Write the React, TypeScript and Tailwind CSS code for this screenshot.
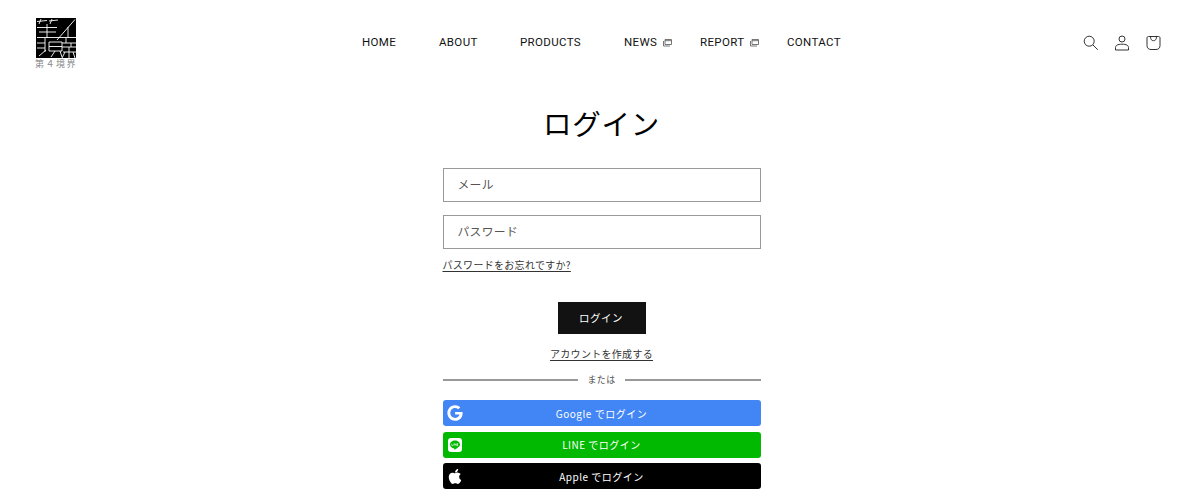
const jp = { fontFamily: '"Noto Sans CJK JP", "Noto Sans", sans-serif' };

function Logo() {
  return (
    <div className="flex w-10 flex-col items-center">
      <svg width="40" height="40" viewBox="0 0 40 40">
        <rect width="40" height="40" fill="#000" />
        <g stroke="#fff" strokeWidth="0.9" fill="none">
          <path d="M1 3.500l10-1M13 3l9-1M5 1l-2 5M16 1l-2 5" />
          <path d="M1 9.500h20M3 14h17M1 19.500h39M11 6v14" />
          <path d="M21 22L39 1.500M32 9v11" />
          <path d="M9 20v14M1 25h8M1 30h8M3 38l7-6" />
          <path d="M13 24h13v9H13zM13 28.500h13M19 33l-4 6M24 33l2 6" />
          <path d="M26 25h14M30 20v5M26 29h14M35 25v4M27 34h13M29 34l-3 6M33 29v11M37 34l2 6" />
        </g>
      </svg>
      <span className="mt-px text-[9px] leading-[10px] tracking-[1.500px] whitespace-nowrap text-[#888]" style={jp}>第４境界</span>
    </div>
  );
}

function WindowIcon() {
  return (
    <svg width="9" height="8" viewBox="0 0 9 8" fill="none" stroke="#666" strokeWidth="0.9" className="ml-[6px]">
      <path d="M2 .5h6.500v5H2zM2 1.700h6.500" />
      <path d="M.5 2v5h6.500" />
    </svg>
  );
}

function NavItem({ label, external, className }: { label: string; external?: boolean; className: string }) {
  return (
    <a href="#" className={`flex items-center text-[11.500px] tracking-[0.35px] text-[#121212] ${className}`}>
      {label}
      {external && <WindowIcon />}
    </a>
  );
}

function SocialButton({ color, label, icon }: { color: string; label: string; icon: React.ReactNode }) {
  return (
    <button className={`relative flex h-[26px] w-full items-center justify-center rounded-[3px] text-[10px] tracking-[0.5px] text-white ${color}`}>
      <span className="absolute top-1/2 left-[4px] flex h-4 w-4 -translate-y-1/2 items-center justify-center">{icon}</span>
      {label}
    </button>
  );
}

function GoogleIcon() {
  return (
    <svg width="16" height="16" viewBox="0 0 488 512" fill="#fff">
      <path d="M488 261.800C488 403.300 391.100 504 248 504 110.800 504 0 393.200 0 256S110.800 8 248 8c66.800 0 123 24.500 166.300 64.900l-67.500 64.900C258.500 52.600 94.300 116.600 94.300 256c0 86.500 69.100 156.600 153.700 156.600 98.200 0 135-70.400 140.800-106.900H248v-85.300h236.100c2.300 12.700 3.900 24.900 3.900 41.400z" />
    </svg>
  );
}

function LineIcon() {
  return (
    <svg width="14" height="14" viewBox="0 0 14 14">
      <rect width="14" height="14" rx="3" fill="#fff" />
      <path d="M7 2.600c-2.800 0-5 1.800-5 4 0 2 1.700 3.600 4.100 3.900.4.100.3.600.2 1 0 .3.300.3.600.1 1.700-1 4-2.600 4.700-3.500.3-.5.4-1 .4-1.500 0-2.200-2.200-4-5-4z" fill="#00b900" />
      <path d="M3.800 5.600v2h1.200M5.800 5.600v2M6.800 7.600v-2l1.400 2v-2M10.200 5.600H9.100v2h1.100M9.100 6.600h1" stroke="#fff" strokeWidth="0.6" fill="none" />
    </svg>
  );
}

function AppleIcon() {
  return (
    <svg width="14" height="17" viewBox="0 0 384 512" fill="#fff">
      <path d="M318.700 268.700c-.2-36.700 16.400-64.400 50-84.800-18.800-26.900-47.200-41.700-84.700-44.600-35.500-2.800-74.300 20.700-88.500 20.700-15 0-49.400-19.700-76.400-19.700C63.300 141.200 4 184.800 4 273.500q0 39.300 14.400 81.200c12.800 36.700 59 126.700 107.200 125.200 25.200-.6 43-17.900 75.800-17.900 31.800 0 48.300 17.900 76.400 17.900 48.600-.7 90.400-82.500 102.600-119.300-65.200-30.700-61.700-90-61.700-91.900zm-56.600-164.200c27.300-32.400 24.800-61.900 24-72.500-24.100 1.400-52 16.400-67.900 34.900-17.500 19.800-27.800 44.300-25.600 71.900 26.100 2 49.900-11.400 69.500-34.300z" />
    </svg>
  );
}

export default function App() {
  return (
    <div className="h-[497px] overflow-hidden bg-white text-[#121212]" style={jp}>
      <header className="flex h-[85px] items-start pr-[38px] pl-[36px]">
        <div className="pt-[18px]">
          <Logo />
        </div>
        <nav className="ml-[286px] flex h-[85px] items-center" style={{ fontFamily: 'Roboto, "Noto Sans", sans-serif' }}>
          <NavItem label="HOME" className="w-[77px]" />
          <NavItem label="ABOUT" className="w-[81px]" />
          <NavItem label="PRODUCTS" className="w-[104px]" />
          <NavItem label="NEWS" external className="w-[76px]" />
          <NavItem label="REPORT" external className="w-[87px]" />
          <NavItem label="CONTACT" className="w-[60px]" />
        </nav>
        <div className="ml-auto flex h-[85px] items-center gap-[15.500px] text-[#333]">
          <svg width="16" height="16" viewBox="0 0 16 16" fill="none" stroke="#333" strokeWidth="1">
            <circle cx="6.200" cy="6.200" r="5" />
            <path d="M9.800 9.800l5 5" />
          </svg>
          <svg width="16" height="16" viewBox="0 0 16 16" fill="none" stroke="#333" strokeWidth="1">
            <circle cx="7" cy="4" r="3" />
            <path d="M.5 15v-2.500c0-2 2-3.300 6.500-3.300s6.500 1.300 6.500 3.300V15z" />
          </svg>
          <svg width="16" height="16" viewBox="0 0 16 16" fill="none" stroke="#333" strokeWidth="1">
            <path d="M2.500 1.500h10c1 0 1.500.5 1.500 1.500v7.500c0 2.500-1.500 4-4 4H5c-2.500 0-4-1.500-4-4V3c0-1 .5-1.500 1.500-1.500z" />
            <path d="M4.500 1.500c0 3 1.200 4.200 3 4.200s3-1.200 3-4.200" />
          </svg>
        </div>
      </header>
      <main className="flex flex-col items-center pl-[3px]">
        <h1 className="mt-[14px] text-[28.500px] leading-[48px] font-normal tracking-[0.7px] text-black">ログイン</h1>
        <div className="mt-[21px] flex w-[318px] flex-col">
          <input placeholder="メール" className="h-[33.500px] w-full border border-[#999] px-[14px] pb-[2px] text-[11.800px] tracking-[0.3px] outline-none placeholder:text-[#555]" />
          <input placeholder="パスワード" className="mt-[13.500px] h-[33.500px] w-full border border-[#999] px-[14px] pb-[2px] text-[11.800px] tracking-[0.3px] outline-none placeholder:text-[#555]" />
          <a href="#" className="mt-[7.500px] self-start text-[10px] leading-[18px] tracking-[0.3px] text-[#333] underline underline-offset-2">パスワードをお忘れですか?</a>
          <button className="mt-[28px] h-[32px] w-[88px] self-center bg-[#121212] pr-px text-[10.500px] tracking-[0.5px] text-white">ログイン</button>
          <a href="#" className="mt-[10px] self-center text-[10px] leading-[20px] tracking-[0.3px] text-[#333] underline underline-offset-2">アカウントを作成する</a>
          <div className="mt-[9px] flex items-center gap-[10px]">
            <div className="h-[2px] flex-1 bg-[#999]" />
            <span className="text-[9px] leading-[14px] tracking-[0.3px] text-[#555]">または</span>
            <div className="h-[2px] flex-1 bg-[#999]" />
          </div>
          <div className="mt-[13.400px] flex flex-col gap-[5.400px]">
            <SocialButton color="bg-[#4285f4]" label="Google でログイン" icon={<GoogleIcon />} />
            <SocialButton color="bg-[#00b900]" label="LINE でログイン" icon={<LineIcon />} />
            <SocialButton color="bg-black" label="Apple でログイン" icon={<AppleIcon />} />
          </div>
        </div>
      </main>
    </div>
  );
}
